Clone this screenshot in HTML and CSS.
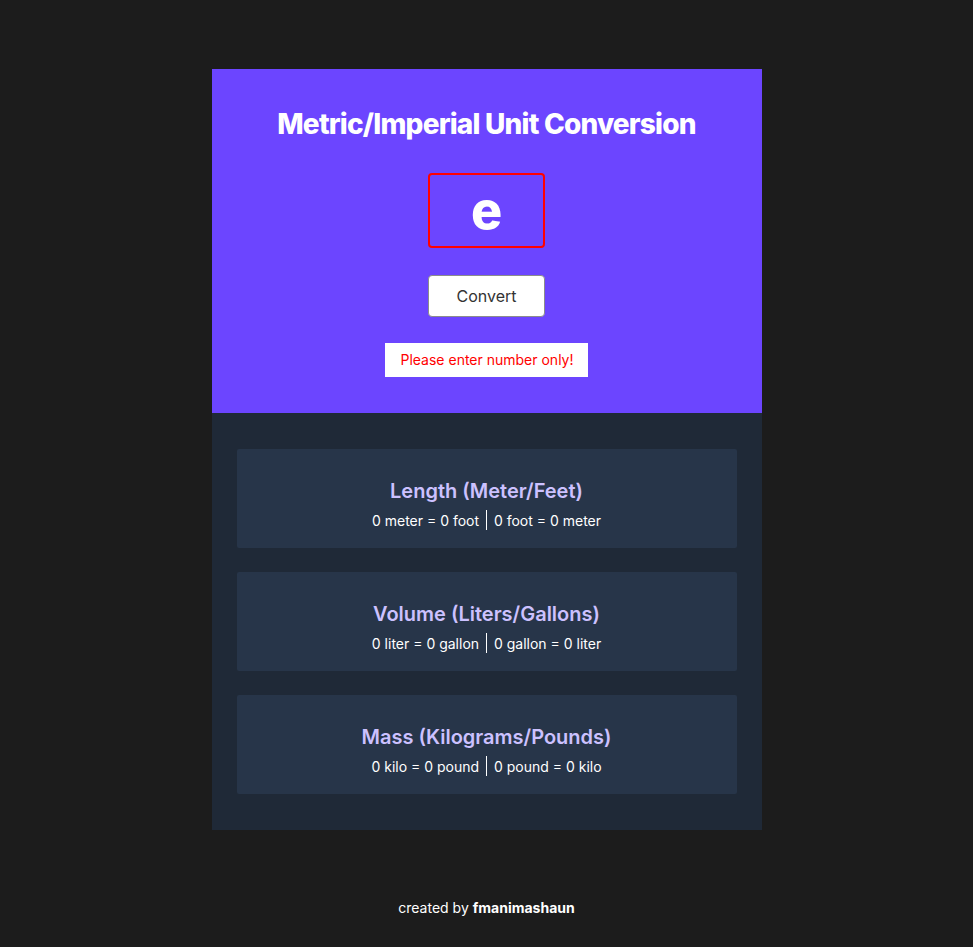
FILE: index.html
```html
<!DOCTYPE html>
<html lang="en">
<head>
<meta charset="utf-8">
<title>Metric/Imperial Unit Conversion</title>
<link rel="stylesheet" href="styles.css">
</head>
<body>
<main class="app">
  <section class="top">
    <h1 class="title">Metric/Imperial Unit Conversion</h1>
    <input class="num-input" type="text" value="e">
    <button class="convert-btn" type="button">Convert</button>
    <p class="error">Please enter number only!</p>
  </section>
  <section class="results">
    <div class="result-card">
      <h2 class="result-title">Length (Meter/Feet)</h2>
      <p class="result-text">0 meter = 0 foot <span class="sep"></span> 0 foot = 0 meter</p>
    </div>
    <div class="result-card">
      <h2 class="result-title">Volume (Liters/Gallons)</h2>
      <p class="result-text">0 liter = 0 gallon <span class="sep"></span> 0 gallon = 0 liter</p>
    </div>
    <div class="result-card">
      <h2 class="result-title">Mass (Kilograms/Pounds)</h2>
      <p class="result-text">0 kilo = 0 pound <span class="sep"></span> 0 pound = 0 kilo</p>
    </div>
  </section>
</main>
<footer class="footer">created by <strong>fmanimashaun</strong></footer>
</body>
</html>
```

FILE: styles.css
```css
* { box-sizing: border-box; }
html, body { margin: 0; padding: 0; }
body {
  background: #1c1c1c;
  font-family: Inter, "Noto Sans", sans-serif;
  color: #fff;
  padding-top: 69px;
}
.app {
  width: 550px;
  margin: 0 auto;
}
.top {
  background: #6c45ff;
  display: flex;
  flex-direction: column;
  align-items: center;
  padding: 38px 0 36px;
}
.title {
  margin: 0;
  font-size: 28px;
  font-weight: 800;
  line-height: 34px;
  letter-spacing: -0.8px;
  color: #fff;
}
.num-input {
  margin-top: 33px;
  width: 115px;
  height: 73px;
  background: transparent;
  border: 1px solid #8a7f9a;
  outline: 2px solid #ff0000;
  outline-offset: -1px;
  border-radius: 3px;
  color: #fff;
  font-family: Inter, "Noto Sans", sans-serif;
  font-size: 52px;
  font-weight: 800;
  text-align: center;
  padding: 0;
}
.convert-btn {
  margin-top: 28px;
  width: 117px;
  height: 42px;
  background: #fff;
  border: 1px solid #8c8c8c;
  border-radius: 4px;
  font-family: Inter, "Noto Sans", sans-serif;
  font-size: 16px;
  color: #333;
}
.error {
  margin: 26px 0 0;
  background: #fff;
  color: #ff0000;
  font-size: 14px;
  line-height: 34px;
  height: 34px;
  padding: 0 14px 0 15px;
}
.results {
  background: #1f2937;
  padding: 36px 25px;
  display: flex;
  flex-direction: column;
  gap: 24px;
}
.result-card {
  background: #273549;
  border-radius: 2px;
  height: 99px;
  display: flex;
  flex-direction: column;
  align-items: center;
  padding-top: 30px;
}
.result-title {
  margin: 0;
  font-size: 20px;
  font-weight: 600;
  line-height: 24px;
  color: #ccc1ff;
}
.result-text {
  margin: 8px 0 0;
  font-size: 14px;
  line-height: 20px;
  color: #fff;
}
.sep {
  display: inline-block;
  width: 1px;
  height: 20px;
  background: #fff;
  vertical-align: middle;
  position: relative;
  top: -2px;
  margin: 0 3px;
}
.footer {
  text-align: center;
  font-size: 14px;
  margin-top: 69px;
  line-height: 18px;
}
.footer strong { font-weight: 700; }
```
